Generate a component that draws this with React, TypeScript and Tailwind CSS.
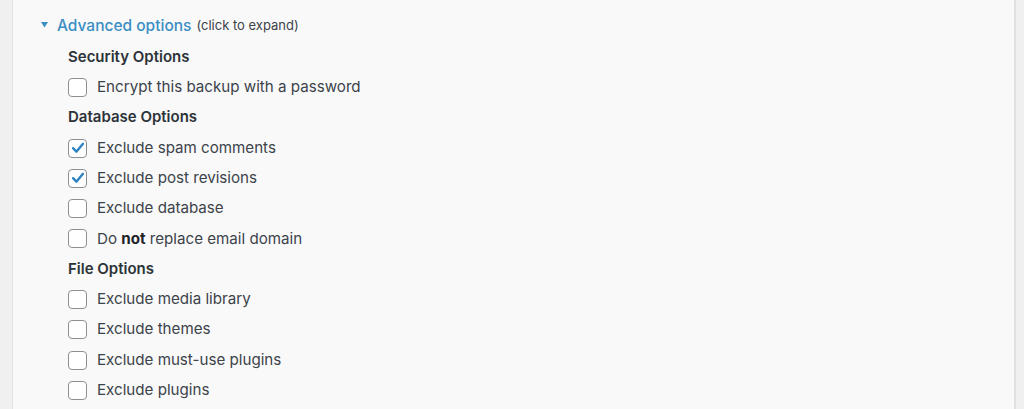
import React from "react";

const Check = ({ checked }: { checked?: boolean }) => (
  <span className="flex h-[19px] w-[19px] shrink-0 items-center justify-center rounded-[4px] border border-[#8c8f94] bg-white">
    {checked && (
      <svg width="16" height="16" viewBox="0 0 20 20" fill="none">
        <path d="M3.8 10.2 L8 14.6 L16.2 4.8" stroke="#2f83c2" strokeWidth="3" strokeLinecap="round" strokeLinejoin="round" />
      </svg>
    )}
  </span>
);

const Row = ({ children, checked }: { children: React.ReactNode; checked?: boolean }) => (
  <div className="flex h-[30.3px] items-center gap-[10px]">
    <Check checked={checked} />
    <span className="text-[15.15px] text-[#3c434a]">{children}</span>
  </div>
);

const Heading = ({ children }: { children: React.ReactNode }) => (
  <div className="flex h-[30.3px] items-center text-[15px] font-semibold text-[#2c3338]">{children}</div>
);

export default function App() {
  return (
    <div
      className="flex h-[409px] w-[1024px] overflow-hidden bg-[#f0f0f0]"
      style={{ fontFamily: "Inter, 'Noto Sans', sans-serif" }}
    >
      <div className="ml-[12px] h-full w-[1004px] border-l border-r-2 border-[#e2e2e2] bg-[#f9f9f9]">
        <div className="pl-[28px] pt-[14px]">
          <div className="flex h-[24px] items-center">
            <svg width="8" height="6" viewBox="0 0 8 6" className="mr-[8px] mt-[-3px]">
              <path d="M0 0 H7 L3.5 5.5 Z" fill="#3a8ec4" />
            </svg>
            <span className="text-[15.5px] font-medium text-[#3a8ec4]">Advanced options</span>
            <span className="ml-[5px] text-[13px] text-[#3c434a]">(click to expand)</span>
          </div>
          <div className="ml-[27px] mt-[4px]">
            <Heading>Security Options</Heading>
            <Row>Encrypt this backup with a password</Row>
            <Heading>Database Options</Heading>
            <Row checked>Exclude spam comments</Row>
            <Row checked>Exclude post revisions</Row>
            <Row>Exclude database</Row>
            <Row>
              Do <b className="font-bold text-[#1d2327]">not</b> replace email domain
            </Row>
            <Heading>File Options</Heading>
            <Row>Exclude media library</Row>
            <Row>Exclude themes</Row>
            <Row>Exclude must-use plugins</Row>
            <Row>Exclude plugins</Row>
          </div>
        </div>
      </div>
    </div>
  );
}
